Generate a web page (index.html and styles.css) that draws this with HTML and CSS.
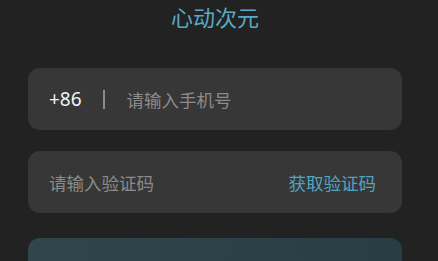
FILE: index.html
```html
<!DOCTYPE html>
<html lang="zh">
<head>
<meta charset="utf-8">
<link rel="stylesheet" href="styles.css">
</head>
<body>
<div class="page">
  <h1 class="title">心动次元</h1>
  <div class="field">
    <span class="code">+86</span>
    <span class="sep"></span>
    <span class="placeholder">请输入手机号</span>
  </div>
  <div class="field field-code">
    <span class="placeholder">请输入验证码</span>
    <span class="get-code">获取验证码</span>
  </div>
  <div class="submit"></div>
</div>
</body>
</html>
```
FILE: styles.css
```css
html, body {
  margin: 0;
  padding: 0;
  background: #222222;
  width: 438px;
  height: 261px;
  overflow: hidden;
}
body {
  font-family: "Noto Sans", "Noto Sans CJK SC", sans-serif;
}
.page {
  width: 374px;
  margin-left: 28px;
  display: flex;
  flex-direction: column;
}
.title {
  margin: 0;
  font-family: "Noto Sans CJK SC", sans-serif;
  font-weight: 400;
  font-size: 22px;
  line-height: 32px;
  color: #58a9c6;
  text-align: center;
}
.field {
  margin-top: 36px;
  height: 62px;
  border-radius: 12px;
  background: #373737;
  display: flex;
  align-items: center;
  padding: 0 26px 0 21px;
  box-sizing: border-box;
}
.field-code {
  margin-top: 21px;
  justify-content: space-between;
}
.code {
  color: #f4f4f4;
  font-size: 19px;
  font-family: "Noto Sans", sans-serif;
}
.sep {
  width: 2px;
  height: 19px;
  background: #8c8c8c;
  margin: 0 22px 0 21px;
}
.placeholder {
  color: #8b8b8b;
  font-size: 17.5px;
  font-family: "Noto Sans CJK SC", sans-serif;
}
.get-code {
  color: #4fa4c3;
  font-size: 17.5px;
  font-family: "Noto Sans CJK SC", sans-serif;
}
.submit {
  margin-top: 25px;
  height: 60px;
  border-radius: 12px;
  background: linear-gradient(90deg, #30464b 0%, #283e44 100%);
}
```
